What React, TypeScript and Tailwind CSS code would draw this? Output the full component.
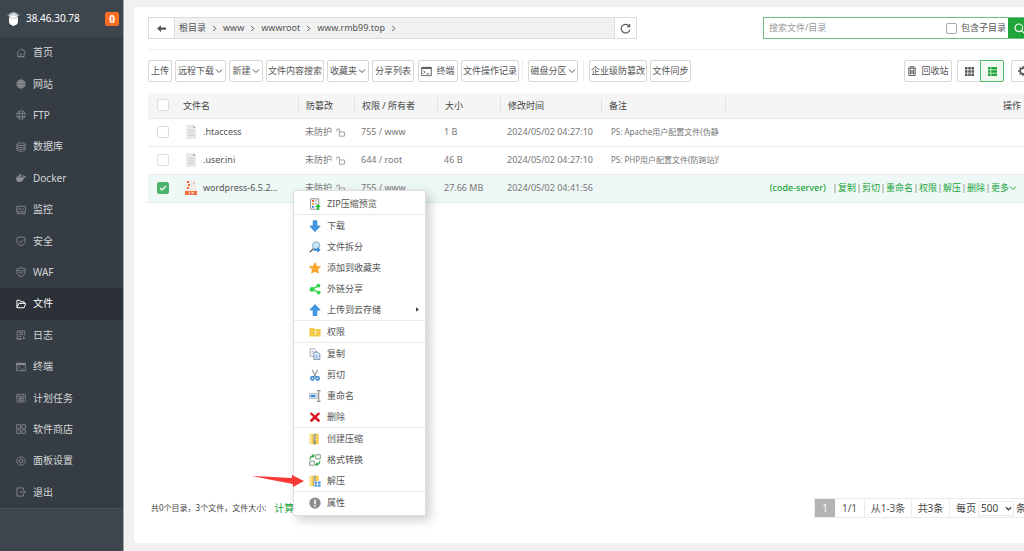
import { useState } from "react";
import type { ReactNode } from "react";
import clsx from "clsx";

type IconProps = { children: ReactNode; className?: string };

// 16x16 stroke icon, used by the sidebar and the toolbar
const Line = ({ children, className }: IconProps) => (
  <svg
    viewBox="0 0 16 16"
    fill="none"
    stroke="currentColor"
    strokeWidth="1.3"
    className={clsx("shrink-0", className ?? "size-[10px]")}
    aria-hidden="true"
  >
    {children}
  </svg>
);

const Solid = ({ children, className }: IconProps) => (
  <svg viewBox="0 0 16 16" className={clsx("shrink-0", className ?? "size-3")} aria-hidden="true">
    {children}
  </svg>
);

const Chevron = () => (
  <Line className="size-2">
    <path d="M2 5l6 6 6-6" strokeWidth="2" />
  </Line>
);

const navItems = [
  {
    name: "首页",
    icon: <Line><path d="M1 8l6-6h4l4 6-2 1v5h-3M3 8v6h4v-4h3M5 14h8" /></Line>,
  },
  {
    name: "网站",
    icon: (
      <Line>
        <circle cx="8" cy="8" r="6.5" fill="currentColor" fillOpacity="0.55" />
        <ellipse cx="8" cy="8" rx="3" ry="6.5" />
        <path d="M2 5.5h12M2 10.5h12M8 1.5v13" />
      </Line>
    ),
  },
  {
    name: "FTP",
    icon: (
      <Line>
        <circle cx="8" cy="8" r="6.8" strokeWidth="1.1" />
        <path d="M1 5.500h14M1 10.500h14M5.500 1.500v13M10.500 1.500v13" strokeWidth="1.200" />
      </Line>
    ),
  },
  {
    name: "数据库",
    icon: (
      <Line>
        <ellipse cx="8" cy="3.5" rx="6.5" ry="2.2" />
        <path d="M1.5 3.500v9c0 3 13 3 13 0v-9M1.500 6.500c0 3 13 3 13 0M1.500 9.500c0 3 13 3 13 0" />
      </Line>
    ),
  },
  {
    name: "Docker",
    icon: (
      <Solid className="size-[10px]">
        <path d="M0 7h10.500c1 0 1.500-1 .8-3l1-1.200c1 .8 1.200 1.500 1.200 2.400 1 0 2 .2 2.500.6-.5 1.400-1.600 1.800-3 1.800C11.500 12 9 14.500 5.500 14.500 2 14.500 0 12 0 7z" fill="currentColor" />
        <path d="M2 4.500h7V7H2zM4.500 2H9v2.500H4.500z" fill="currentColor" opacity=".8" />
      </Solid>
    ),
  },
  {
    name: "监控",
    icon: <Line><path d="M1 2h14v9H1zM1 14h14M3 8l3-3 3 3.500L13 5M3 11v3M13 11v3M4 5h2" /></Line>,
  },
  {
    name: "安全",
    icon: <Line><path d="M8 1l6.500 2v5c0 4-3 6-6.500 7.500C4.500 14 1.500 12 1.500 8V3zM5 8l2.500 2.500L11.500 6" /></Line>,
  },
  {
    name: "WAF",
    icon: <Line><path d="M8 1l6.500 2v5c0 4-3 6-6.500 7.500C4.500 14 1.500 12 1.500 8V3zM1.500 6h13M4.500 9.500h7" /></Line>,
  },
  {
    name: "文件",
    icon: <Line><path d="M1.500 14V2H6l1.500 2.500H13V7M1.500 14L4.500 7h11L13 14z" strokeWidth="1.6" /></Line>,
  },
  {
    name: "日志",
    icon: <Line><path d="M14 9V1.500H2v13h7M4.500 4.500h7M4.500 7.500h7M4.500 10.500h4M1 14.500h8M12.500 10v4.500M10.500 12.500l2 2 2-2" /></Line>,
  },
  {
    name: "终端",
    icon: <Line><path d="M1 2h14v12H1z" /><path d="M1 3.500h14" strokeWidth="3" /><path d="M3.500 7l2.500 2-2.500 2M8 11.500h4" /></Line>,
  },
  {
    name: "计划任务",
    icon: <Line><path d="M1 2.500h14v12H1zM1 5.500h14M3 8.500h10M3 11.500h10M5 5.500v9M8 5.500v9M11 5.500v9M4 1v3M12 1v3" strokeWidth="1" /></Line>,
  },
  {
    name: "软件商店",
    icon: <Line><path d="M1 1h6v6H1zM9.500 1h5.500v6H9.500zM1 9.500h6V15H1zM9.500 9.500h5.500V15H9.500z" /></Line>,
  },
  {
    name: "面板设置",
    icon: (
      <Line>
        <path d="M5.500 1.500h5l1.500 1.500 2.500 2.500v5L12 13l-1.500 1.500h-5L4 13l-2.500-2.500v-5L4 3z" />
        <circle cx="8" cy="8" r="3" />
      </Line>
    ),
  },
  {
    name: "退出",
    icon: <Line><path d="M12 5V1.500H1.500v13H12V11M6 8h9M12.500 5.500L15 8l-2.500 2.500" /></Line>,
  },
];

const files = [
  { name: ".htaccess", perm: "755 / www", size: "1 B", time: "2024/05/02 04:27:10", note: "PS: Apache用户配置文件(伪静" },
  { name: ".user.ini", perm: "644 / root", size: "46 B", time: "2024/05/02 04:27:10", note: "PS: PHP用户配置文件(防跨站)!" },
  { name: "wordpress-6.5.2...", perm: "755 / www", size: "27.66 MB", time: "2024/05/02 04:41:56", note: "" },
];

const columns = ["文件名", "防篡改", "权限 / 所有者", "大小", "修改时间", "备注"];
const rowActions = ["复制", "剪切", "重命名", "权限", "解压", "删除"];

const zipFolder = (
  <>
    <path d="M1 1h12v14H1z" fill="#f6cf57" />
    <path d="M1 1h3v14H1z" fill="#fbe08a" />
    <path d="M6 1h3v14H6z" fill="#8e8a78" />
    <path d="M6 2h1.500v1.500H6zM7.500 4H9v1.500H7.500zM6 6h1.500v1.500H6zM7.500 8H9v2H7.500z" fill="#e8e4d2" />
  </>
);

const menuGroups = [
  [
    {
      name: "ZIP压缩预览",
      icon: (
        <Solid>
          <path d="M2 1h11v14H2z" fill="#f4f4f4" stroke="#777" />
          <path d="M4 2.500h2.500v2.500H4z" fill="#e8452c" />
          <path d="M4 6.500h2.500V9H4z" fill="#f0a51e" />
          <path d="M4 10.500h2.500V13H4z" fill="#2986d8" />
          <path d="M8 4h3M8 7.500h3" stroke="#999" />
          <path d="M12 8l4 4h-2.500v4h-3v-4H8z" fill="#1fbf3a" />
        </Solid>
      ),
    },
  ],
  [
    { name: "下载", icon: <Solid><path d="M5.500 1h5v7H15l-7 7.500L1 8h4.500z" fill="#3d96e6" stroke="#2376c4" strokeWidth=".8" /></Solid> },
    {
      name: "文件拆分",
      icon: (
        <Solid>
          <path d="M1 15l5-5" stroke="#7b6a55" strokeWidth="2.200" />
          <circle cx="9.500" cy="6" r="4.800" fill="#cfe9fb" stroke="#7fa5c2" strokeWidth="1.300" />
          <path d="M6 10.500h5V8l4.500 3.800L11 15.500V13H6z" fill="#2f8be0" />
        </Solid>
      ),
    },
    {
      name: "添加到收藏夹",
      icon: <Solid><path d="M8 .8l2.300 4.700 5.200.7-3.800 3.600 1 5.200L8 12.500 3.300 15l1-5.200L.5 6.200l5.200-.7z" fill="#fca829" stroke="#e98a17" strokeWidth=".6" /></Solid>,
    },
    {
      name: "外链分享",
      icon: (
        <Solid>
          <path d="M12.500 3.500L4 8.500l9 4" stroke="#2fd44c" strokeWidth="1.600" fill="none" />
          <circle cx="12.500" cy="3.500" r="2.500" fill="#2fd44c" />
          <circle cx="4" cy="8.500" r="3.300" fill="#2fd44c" />
          <circle cx="13" cy="12.800" r="2.500" fill="#2fd44c" />
        </Solid>
      ),
    },
    {
      name: "上传到云存储",
      sub: true,
      icon: <Solid><path d="M5.500 15.500h5V8H15L8 .8 1 8h4.500z" fill="#3d96e6" stroke="#2376c4" strokeWidth=".8" /></Solid>,
    },
  ],
  [
    {
      name: "权限",
      icon: (
        <Solid>
          <path d="M.5 2.500h5.500l1.500 1.500h8V14H.5z" fill="#f3c94b" />
          <circle cx="8.500" cy="7.500" r="1.500" fill="#fff3c4" />
          <path d="M8 8h1.200v4H8z" fill="#fff3c4" />
        </Solid>
      ),
    },
  ],
  [
    {
      name: "复制",
      icon: (
        <Solid>
          <path d="M1.500 1h5.500l2.500 2.500V11h-8z" fill="#fff" stroke="#8a919c" />
          <path d="M6.500 5.500H12l2.500 2.500v7.500h-8z" fill="#e4efff" stroke="#66758d" />
          <path d="M8.500 9.500h4M8.500 11.500h4M8.500 13.500h4M3.500 4.500H6M3.500 7h2" stroke="#6ea0e8" />
        </Solid>
      ),
    },
    {
      name: "剪切",
      icon: (
        <Solid>
          <path d="M4 1l5.500 10M11.500 1L6.500 11" stroke="#8d949b" strokeWidth="1.500" />
          <circle cx="4.500" cy="12.500" r="2.200" fill="none" stroke="#2480cf" strokeWidth="1.800" />
          <circle cx="11.500" cy="12.500" r="2.200" fill="none" stroke="#2480cf" strokeWidth="1.800" />
        </Solid>
      ),
    },
    {
      name: "重命名",
      icon: (
        <Solid>
          <path d="M.5 4.500H11v7H.5z" fill="#e4e8ec" stroke="#a6abb1" />
          <path d="M2 6.500h6.500v3H2z" fill="#2e8fe6" />
          <path d="M10.500 1h5M10.500 15h5M13 1v14" stroke="#777" strokeWidth="1.300" />
        </Solid>
      ),
    },
    {
      name: "删除",
      icon: <Solid><path d="M3 1.500L8 6l4.500-4.500L15 3.500 10.500 8l4.500 4.800L12.500 15 8 10.500 3.500 15 1 12.500 5.500 8 1 3.500z" fill="#dc1524" /></Solid>,
    },
  ],
  [
    { name: "创建压缩", icon: <Solid>{zipFolder}</Solid> },
    {
      name: "格式转换",
      icon: (
        <Solid>
          <path d="M9 1h6v5.500H9zM1 9.500h6V15H1z" fill="none" stroke="#6f8f77" strokeWidth="1.200" />
          <path d="M1.500 7.500C1.500 4 3 2.500 6 2.500M4.500.5l2.500 2-2.500 2M14.500 9c0 3-1.500 5-4.500 5M11.500 11.500L9 14l2.500 2" fill="none" stroke="#25a544" strokeWidth="1.500" />
        </Solid>
      ),
    },
    {
      name: "解压",
      icon: (
        <Solid>
          {zipFolder}
          <path d="M7 8h9v8H7z" fill="#fff" />
          <path d="M7.500 8.500h3.500v3H7.500zM12 8.500h3.500v3H12zM7.500 12.500h3.500v3H7.500zM12 12.500h3.500v3H12z" fill="#4a97dc" />
        </Solid>
      ),
    },
  ],
  [
    {
      name: "属性",
      icon: (
        <Solid>
          <circle cx="8" cy="8" r="7.500" fill="#8c8c8c" />
          <path d="M7 3.500h2V9.500H7zM7 11h2v2H7z" fill="#fff" />
        </Solid>
      ),
    },
  ],
];

const Tick = ({ checked, label, onChange }: { checked: boolean; label: string; onChange?: () => void }) => (
  <span className="relative grid size-3 place-items-center">
    <input
      type="checkbox"
      aria-label={label}
      checked={checked}
      onChange={onChange}
      className="size-3 appearance-none rounded-xs border border-[#d9dcdf] bg-white checked:border-[#4fb36c] checked:bg-[#4fb36c]"
    />
    {checked && (
      <Line className="pointer-events-none absolute size-2 text-white">
        <path d="M2 8l4 4 8-8" strokeWidth="2.400" />
      </Line>
    )}
  </span>
);

const ToolButton = ({ children, className }: { children: ReactNode; className: string }) => (
  <button
    type="button"
    className={clsx(
      "flex h-[22px] shrink-0 items-center justify-center gap-px rounded-xs border border-[#d8d8d8] bg-white whitespace-nowrap text-[#555]",
      className
    )}
  >
    {children}
  </button>
);

const Divider = () => <span className="h-[22px] w-px shrink-0 bg-[#ececec]" />;

const Sidebar = () => (
  <aside className="w-[124px] shrink-0 border-r border-[#a3a6a8] bg-[#3d454d] text-[10px] text-[#d3d6d8]">
    <div className="flex h-[37px] items-center pr-1 pl-[7px]">
      <svg viewBox="0 0 26 28" className="h-[14px] w-[13px]" aria-hidden="true">
        <path d="M13 0l9 3-9 3-9-3z" fill="#b9bdc0" />
        <path d="M0 6l13-3 13 3-5 2H5z" fill="#d6d9db" />
        <path d="M4 9l9-2 9 2v11c0 4-4 6-9 8-5-2-9-4-9-8z" fill="#fff" />
        <path d="M4 11l9 2 9-2" stroke="#8b9094" fill="none" />
      </svg>
      <span className="ml-[6px] text-white">38.46.30.78</span>
      <span className="ml-auto grid size-[14px] place-items-center rounded-xs bg-[#fc6d26] font-bold text-white">0</span>
    </div>
    <nav className="grid h-[472px] auto-rows-fr border-b border-[#485059] bg-[#353c43]">
      {navItems.map((item) => (
        <a
          key={item.name}
          href="#"
          className={clsx("flex items-center gap-[7px] pl-4", item.name === "文件" && "bg-[#2c3138] text-white")}
        >
          <span className={item.name === "文件" ? "text-white" : "text-[#8b9094]"}>{item.icon}</span>
          {item.name}
        </a>
      ))}
    </nav>
  </aside>
);

const PathBar = () => (
  <div className="flex items-center justify-between border-b border-[#f0f0f0] pb-[10px]">
    <div className="flex h-[22px] w-[489px] items-stretch border border-[#dcdcdc] bg-[#f1f1f1] text-[#555]">
      <button type="button" aria-label="后退" className="grid w-[26px] place-items-center border-r border-[#dcdcdc] bg-white">
        <Solid className="size-[9px]">
          <path d="M7 2v4h9v4H7v4L0 8z" fill="#555" />
        </Solid>
      </button>
      <ol className="flex flex-1 items-center pl-1">
        {["根目录", "www", "wwwroot", "www.rmb99.top"].map((part) => (
          <li key={part} className="flex items-center">
            <a href="#">{part}</a>
            <Line className="mx-[5px] size-[7px]">
              <path d="M5 2l6 6-6 6" strokeWidth="2.200" />
            </Line>
          </li>
        ))}
      </ol>
      <button type="button" aria-label="刷新" className="grid w-[22px] place-items-center border-l border-[#dcdcdc] bg-white">
        <Line className="size-[11px]">
          <path d="M13.500 5A6.300 6.300 0 1 0 14.300 9.500M14 1.500V5.500h-4" strokeWidth="1.600" />
        </Line>
      </button>
    </div>
    <form className="flex h-[22px] w-[272px] items-center border border-[#6fc083] bg-white text-[#555]">
      <input
        type="text"
        aria-label="搜索文件/目录"
        placeholder="搜索文件/目录"
        className="min-w-0 flex-1 pl-[5px] outline-none placeholder:text-[#999]"
      />
      <label className="flex items-center gap-1">
        <input type="checkbox" className="size-[11px] appearance-none rounded-xs border border-[#aaa] bg-white" />
        包含子目录
      </label>
      <button type="button" aria-label="搜索" className="ml-[2px] flex h-full w-[26px] items-center bg-[#20a53a] pl-[6px] text-white">
        <Line className="size-[11px]">
          <circle cx="7" cy="7" r="5.500" strokeWidth="1.600" />
          <path d="M11 11l4 4" strokeWidth="1.600" />
        </Line>
      </button>
    </form>
  </div>
);

const Toolbar = () => (
  <div className="flex items-center justify-between pt-[10px] pb-[11px]">
    <div className="flex items-center gap-[3px]">
      <ToolButton className="w-6">上传</ToolButton>
      <ToolButton className="w-[51px]">远程下载<Chevron /></ToolButton>
      <ToolButton className="w-[34px]">新建<Chevron /></ToolButton>
      <ToolButton className="w-[58px]">文件内容搜索</ToolButton>
      <ToolButton className="w-[42px]">收藏夹<Chevron /></ToolButton>
      <ToolButton className="w-[42px]">分享列表</ToolButton>
      <ToolButton className="ml-px w-10">
        <Line className="mr-[3px] size-[11px]">
          <path d="M1 2h14v12H1zM3.500 7l2.500 2-2.500 2M8 11.500h4" />
          <path d="M1 3h14" strokeWidth="2.500" />
        </Line>
        终端
      </ToolButton>
      <ToolButton className="w-[58px]">文件操作记录</ToolButton>
      <Divider />
      <ToolButton className="ml-[2px] w-[50px]">磁盘分区<Chevron /></ToolButton>
      <span className="mx-[2px] flex"><Divider /></span>
      <ToolButton className="w-[58px]">企业级防篡改</ToolButton>
      <ToolButton className="w-[41px]">文件同步</ToolButton>
    </div>
    <div className="flex items-center">
      <ToolButton className="w-12">
        <Line className="mr-[3px] size-[10px]">
          <path d="M1.500 3.500h13M5.500 3V1h5v2M3 4v11h10V4M5.500 6v7M8 6v7M10.500 6v7" strokeWidth="1.600" />
        </Line>
        回收站
      </ToolButton>
      <button type="button" aria-label="图标视图" className="ml-[5px] grid h-[22px] w-[23px] place-items-center rounded-l-xs border border-r-0 border-[#d8d8d8] text-[#555]">
        <Solid className="size-[9px]">
          <path d="M0 0h4.500v4.500H0zM5.800 0h4.500v4.500H5.800zM11.500 0H16v4.500h-4.500zM0 5.800h4.500v4.500H0zM5.800 5.800h4.500v4.500H5.800zM11.500 5.800H16v4.500h-4.500zM0 11.500h4.500V16H0zM5.800 11.500h4.500V16H5.800zM11.500 11.500H16V16h-4.500z" fill="currentColor" />
        </Solid>
      </button>
      <button type="button" aria-label="列表视图" className="grid h-[22px] w-6 place-items-center rounded-r-xs border border-[#52b567] bg-[#f0f9f2] text-[#20a53a]">
        <Solid className="size-[9px]">
          <path d="M0 0h4.500v4.500H0zM5.800 0H16v4.500H5.800zM0 5.800h4.500v4.500H0zM5.800 5.800H16v4.500H5.800zM0 11.500h4.500V16H0zM5.800 11.500H16V16H5.800z" fill="currentColor" />
        </Solid>
      </button>
      <button type="button" aria-label="设置" className="ml-[7px] grid h-[22px] w-6 place-items-center rounded-xs border border-[#d8d8d8] text-[#555]">
        <Line>
          <circle cx="8" cy="8" r="4.500" strokeWidth="2.600" />
          <path d="M8 0v3M8 13v3M0 8h3M13 8h3M2.500 2.500l2 2M11.500 11.500l2 2M2.500 13.500l2-2M11.500 4.500l2-2" strokeWidth="2.400" />
        </Line>
      </button>
    </div>
  </div>
);

const FileIcon = ({ zip }: { zip: boolean }) =>
  zip ? (
    <svg viewBox="0 0 12 14" className="h-[14px] w-3" aria-hidden="true">
      <path d="M1 0h7l3 3v11H1z" fill="#f5ece6" />
      <path d="M2 0h2v2H2zM3 3h2v2H3zM2 6h2v2H2z" fill="#f4683a" />
      <path d="M8 0l3 3H8z" fill="#e2c9bb" />
      <path d="M0 10h12v4H0z" fill="#f4683a" />
      <path d="M3.500 11h1.500L3.500 13h1.500M6.200 10.800v2.400M7.500 13.200V11H9v1.200H7.500" fill="none" stroke="#fff" strokeWidth=".5" />
    </svg>
  ) : (
    <svg viewBox="0 0 12 14" className="h-[14px] w-3" aria-hidden="true">
      <path d="M1 0h7l3 3v11H1z" fill="#e9e9e9" />
      <path d="M8 0l3 3H8z" fill="#b5b5b5" />
      <path d="M3 5.500h6M3 8h6M3 10.500h6" stroke="#d0d0d0" />
    </svg>
  );

const FileTable = () => {
  const [selected, setSelected] = useState<string[]>(["wordpress-6.5.2..."]);
  const toggle = (name: string) =>
    setSelected((prev) => (prev.includes(name) ? prev.filter((n) => n !== name) : [...prev, name]));

  return (
    <table className="w-full table-fixed text-left text-[#777]">
      <colgroup>
        <col className="w-[28px]" />
        <col className="w-[123px]" />
        <col className="w-[56px]" />
        <col className="w-[83px]" />
        <col className="w-[63px]" />
        <col className="w-[101px]" />
        <col className="w-[124px]" />
        <col />
      </colgroup>
      <thead>
        <tr className="h-[25px] border-b border-[#ebebeb] bg-[#f5f5f5] text-[#444]">
          <th className="pl-[9px]">
            <Tick checked={false} label="全选" />
          </th>
          {columns.map((col) => (
            <th key={col} className="pl-[7px] font-normal whitespace-nowrap">
              <span className="flex h-[14px] items-center border-r border-[#e2e2e2]">{col}</span>
            </th>
          ))}
          <th className="pr-[14px] text-right font-normal">操作</th>
        </tr>
      </thead>
      <tbody>
        {files.map((file) => {
          const checked = selected.includes(file.name);
          return (
            <tr key={file.name} className={clsx("h-7 border-b", checked ? "border-[#dcefe9] bg-[#eef8f6]" : "border-[#ebebeb]")}>
              <td className="pl-[9px]">
                <Tick checked={checked} label={file.name} onChange={() => toggle(file.name)} />
              </td>
              <td className="pl-[9px]">
                <span className="flex items-center gap-[6px] whitespace-nowrap text-[#555]">
                  <FileIcon zip={file.name.startsWith("wordpress")} />
                  {file.name}
                </span>
              </td>
              <td className="pl-[6px]">
                <span className="flex items-center gap-1 whitespace-nowrap">
                  未防护
                  <Line className="size-[9px] text-[#999]">
                    <path d="M6 7h9v7.500H6zM6 7V2H1.500v4" strokeWidth="1.600" />
                  </Line>
                </span>
              </td>
              <td className="pl-[6px]">{file.perm}</td>
              <td className="pl-[6px]">{file.size}</td>
              <td className="pl-[6px] whitespace-nowrap">{file.time}</td>
              <td className="pl-[9px] text-[8px] whitespace-nowrap">{file.note}</td>
              <td className="pr-[18px]">
                {checked && (
                  <span className="flex items-center justify-end whitespace-nowrap text-[#777]">
                    <a href="#" className="mr-[6px] font-medium text-[#20a53a]">(code-server)</a>
                    {rowActions.map((action) => (
                      <span key={action} className="flex">
                        <span className="w-[6px] text-center">|</span>
                        <a href="#" className="text-[#20a53a]">{action}</a>
                      </span>
                    ))}
                    <span className="w-[6px] text-center">|</span>
                    <a href="#" className="flex items-center text-[#20a53a]">更多<Chevron /></a>
                  </span>
                )}
              </td>
            </tr>
          );
        })}
      </tbody>
    </table>
  );
};

const ContextMenu = () => (
  <div className="absolute top-[190px] left-[293px] w-[133px] border border-[#dedede] bg-white py-[2px] text-[#555] shadow-[4px_4px_10px_rgba(0,0,0,0.2)]">
    {menuGroups.map((group, index) => (
      <ul key={index} className={clsx(index > 0 && "border-t border-[#ebebeb]")}>
        {group.map((item) => (
          <li key={item.name}>
            <button type="button" className="flex h-[21px] w-full items-center gap-[6px] pr-[6px] pl-[15px]">
              {item.icon}
              {item.name}
              {"sub" in item && (
                <svg viewBox="0 0 4 6" className="ml-auto h-[5px] w-[3px]" aria-hidden="true">
                  <path d="M0 0l4 3-4 3z" fill="#444" />
                </svg>
              )}
            </button>
          </li>
        ))}
      </ul>
    ))}
  </div>
);

const Footer = () => (
  <footer className="mt-auto flex items-center justify-between pb-[25px] text-[#444]">
    <p className="flex items-center gap-2 pl-[3px] text-[8px]">
      共0个目录，3个文件，文件大小:
      <a href="#" className="text-[10px] text-[#20a53a]">计算</a>
    </p>
    <div className="flex h-5 items-stretch border border-[#ececec] text-[10px] text-[#555]">
      <span className="grid w-5 place-items-center bg-[#b4b4b4] text-white">1</span>
      <span className="grid w-[30px] place-items-center border-r border-[#ececec]">1/1</span>
      <span className="grid w-[47px] place-items-center border-r border-[#ececec]">从1-3条</span>
      <span className="grid w-[38px] place-items-center border-r border-[#ececec] text-[#444]">共3条</span>
      <label className="flex w-[84px] items-center gap-[2px] pl-[6px] whitespace-nowrap text-[#444]">
        每页
        <span className="relative flex items-center">
          <select className="h-[15px] w-[36px] appearance-none border border-[#ececec] bg-white pl-[2px] leading-[13px]">
            <option>500</option>
          </select>
          <Line className="pointer-events-none absolute right-[2px] size-[7px]">
            <path d="M2 5l6 6 6-6" strokeWidth="3" />
          </Line>
        </span>
        条
      </label>
    </div>
  </footer>
);

export default function App() {
  return (
    <div className="relative flex min-h-screen overflow-hidden bg-[#f1f1f1] font-['Noto_Sans','Noto_Sans_CJK_SC',sans-serif] text-[9px]">
      <Sidebar />
      <main className="flex min-w-0 flex-1 flex-col pt-[7px] pb-2 pl-[10px]">
        <div className="flex flex-1 flex-col rounded-l-sm bg-white pt-[10px] pl-[14px]">
          <div className="-mr-[11px] flex flex-1 flex-col">
            <PathBar />
            <Toolbar />
            <FileTable />
            <Footer />
          </div>
        </div>
      </main>
      <ContextMenu />
      <svg viewBox="0 0 52 12" className="absolute top-[475px] left-[252px] h-3 w-[52px]" aria-hidden="true">
        <path d="M0 1l40 2V0l12 6-11 6V9L20 5z" fill="#f93a37" />
      </svg>
    </div>
  );
}
